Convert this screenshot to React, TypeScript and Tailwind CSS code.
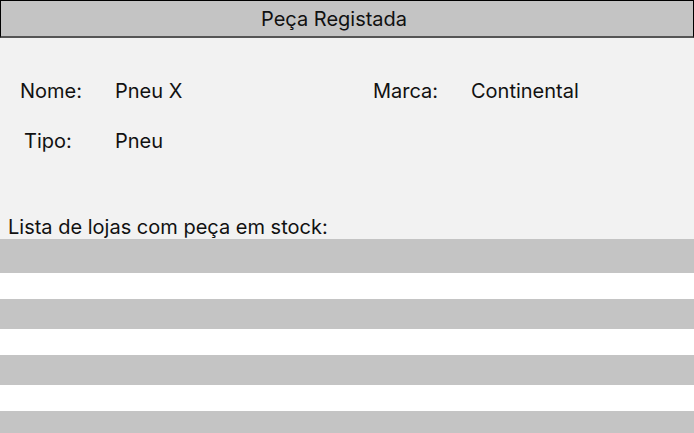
export default function App() {
  const rows = ["h-[34px]", "h-[30px]", "h-[30px]", "h-[30px]"];

  return (
    <div className="h-[433px] w-[694px] overflow-hidden bg-white text-[20px] leading-[24px] text-[#111]" style={{ fontFamily: "Inter, 'Noto Sans', sans-serif" }}>
      {/* Title bar */}
      <div className="flex h-[38px] items-center border border-b-2 border-black border-b-[#555] bg-[#c4c4c4] pl-[260px]">
        <span>Peça Registada</span>
      </div>

      {/* Details */}
      <div className="flex h-[201px] flex-col bg-[#f2f2f2] pt-[41px]">
        <div className="flex">
          <span className="w-[115px] pl-[20px]">Nome:</span>
          <span className="w-[258px]">Pneu X</span>
          <span className="w-[98px]">Marca:</span>
          <span>Continental</span>
        </div>
        <div className="mt-[26px] flex">
          <span className="w-[115px] pl-[24px]">Tipo:</span>
          <span>Pneu</span>
        </div>
        <div className="mt-auto pl-[8px]">Lista de lojas com peça em stock:</div>
      </div>

      {/* Store list */}
      <div className="flex flex-col gap-[26px]">
        {rows.map((h, i) => (
          <div key={i} className={`${h} bg-[#c4c4c4]`} />
        ))}
      </div>
    </div>
  );
}
